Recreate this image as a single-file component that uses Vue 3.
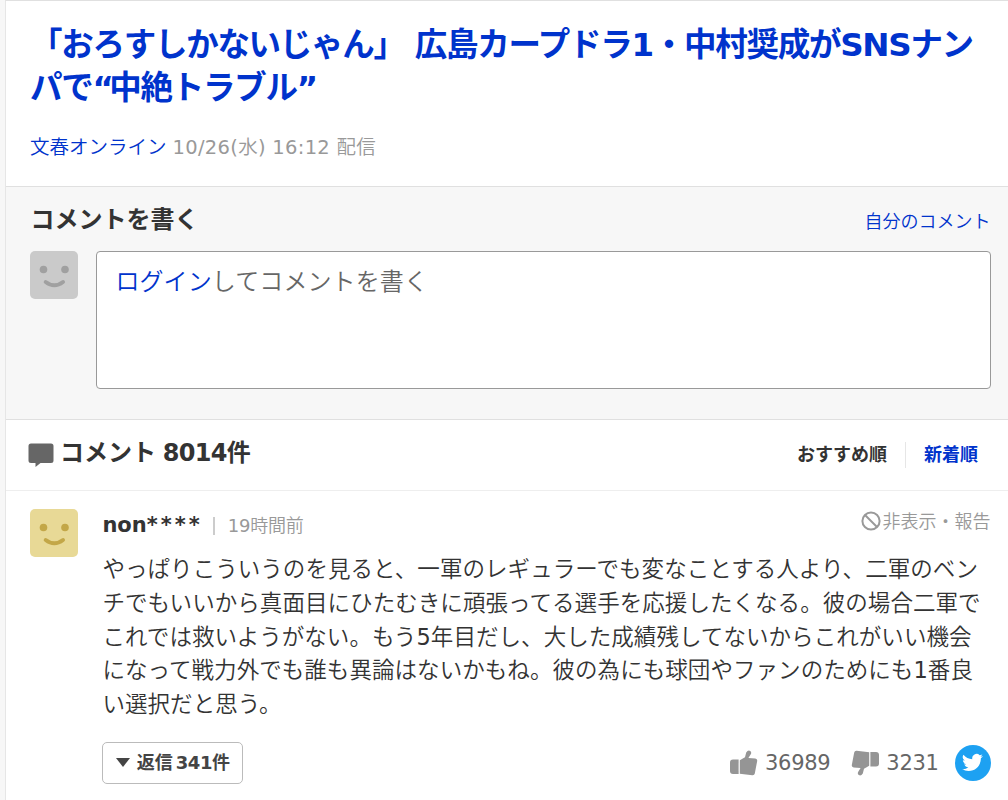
<script setup>
import { ref } from 'vue';

const sortType = ref('recommend');

const comment = {
  user: 'non',
  mask: '****',
  time: '19時間前',
  lines: [
    'やっぱりこういうのを見ると、一軍のレギュラーでも変なことする人より、二軍のベン',
    'チでもいいから真面目にひたむきに頑張ってる選手を応援したくなる。彼の場合二軍で',
    'これでは救いようがない。もう5年目だし、大した成績残してないからこれがいい機会',
    'になって戦力外でも誰も異論はないかもね。彼の為にも球団やファンのためにも1番良',
    'い選択だと思う。',
  ],
  replies: 341,
  good: 36989,
  bad: 3231,
};

// 数字と和文を分けて太さを揃える
const splitDigits = (text) => text.split(/(\d+)/).filter(Boolean);
const isDigits = (text) => /^\d+$/.test(text);
</script>

<template>
  <div class="page">
    <main class="content">
      <header class="article">
        <h1 class="article-title">
          <span class="line">「おろすしかないじゃん」 広島カープドラ1・中村奨成がSNSナン</span>
          <span class="line">パで<span class="quote">“</span>中絶トラブル<span class="quote">”</span></span>
        </h1>
        <p class="article-meta">
          <a class="link">文春オンライン</a>
          <span class="article-date"><span class="digits">10/26(</span>水<span class="digits">) 16:12 </span>配信</span>
        </p>
      </header>

      <section class="write">
        <div class="write-head">
          <h2>コメントを書く</h2>
          <a class="link">自分のコメント</a>
        </div>
        <div class="write-body">
          <svg class="avatar" viewBox="0 0 48 48">
            <rect width="48" height="48" rx="5" fill="#cacaca" />
            <g fill="#a0a0a0">
              <circle cx="13.5" cy="18.5" r="3.8" />
              <circle cx="35" cy="18.5" r="3.8" />
            </g>
            <path d="M15.7 31Q24.3 37.6 33 31" fill="none" stroke="#a0a0a0" stroke-width="4" stroke-linecap="round" />
          </svg>
          <div class="write-box"><a class="link">ログイン</a>してコメントを書く</div>
        </div>
      </section>

      <section class="list-head">
        <svg class="balloon" viewBox="0 0 26 25">
          <path d="M3 .5H23Q25.5.5 25.5 3V17.5Q25.5 20 23 20H12.5L7.5 24V20H3Q.5 20 .5 17.5V3Q.5.5 3 .5Z" fill="#666" />
        </svg>
        <h2>コメント <span class="count">8014</span>件</h2>
        <ul class="sort">
          <li :class="{ current: sortType === 'recommend' }" @click="sortType = 'recommend'">おすすめ順</li>
          <li :class="{ current: sortType === 'new' }" @click="sortType = 'new'">新着順</li>
        </ul>
      </section>

      <article class="comment">
        <svg class="avatar" viewBox="0 0 48 48">
          <rect width="48" height="48" rx="5" fill="#e8d996" />
          <g fill="#c3a748">
            <circle cx="13.5" cy="18.5" r="3.8" />
            <circle cx="35" cy="18.5" r="3.8" />
          </g>
          <path d="M15.7 31Q24.3 37.6 33 31" fill="none" stroke="#c3a748" stroke-width="4" stroke-linecap="round" />
        </svg>
        <div class="comment-main">
          <div class="comment-head">
            <span class="user">{{ comment.user }}<span class="mask">{{ comment.mask }}</span></span>
            <span class="time">
              <span v-for="part in splitDigits(comment.time)" :key="part" :class="{ digits: isDigits(part) }">{{ part }}</span>
            </span>
            <a class="report">
              <svg viewBox="0 0 20 20">
                <circle cx="10" cy="10" r="8.6" fill="none" stroke="#999" stroke-width="2" />
                <path d="M4 4L16 16" stroke="#999" stroke-width="2" />
              </svg>
              <span>非表示・報告</span>
            </a>
          </div>
          <p class="comment-text">
            <span v-for="line in comment.lines" :key="line" class="line">
              <span v-for="part in splitDigits(line)" :key="part" :class="{ digits: isDigits(part) }">{{ part }}</span>
            </span>
          </p>
          <div class="comment-foot">
            <button type="button" class="reply">
              <svg viewBox="0 0 14 9"><path d="M0 0H14L7 9Z" fill="#444" /></svg>
              <span>返信<span class="reply-count">{{ comment.replies }}</span>件</span>
            </button>
            <div class="votes">
              <svg class="thumb" viewBox="0 0 28 26">
                <path d="M3 9.5H8.6V24H3Q0 24 0 21V12.5Q0 9.5 3 9.5Z" fill="#959595" />
                <path d="M9.8 10.2L15 7.2 16.2 2.6Q18-.4 20.2.9 22 2.2 20.6 4.6L18.4 8 25.3 8.4Q27.5 8.7 27.2 10.9L24.8 23.5Q24.4 25.5 22.3 25.3L9.8 23.8Z" fill="#959595" />
              </svg>
              <span class="num">{{ comment.good }}</span>
              <svg class="thumb down" viewBox="0 0 28 26">
                <path d="M3 9.5H8.6V24H3Q0 24 0 21V12.5Q0 9.5 3 9.5Z" fill="#959595" />
                <path d="M9.8 10.2L15 7.2 16.2 2.6Q18-.4 20.2.9 22 2.2 20.6 4.6L18.4 8 25.3 8.4Q27.5 8.7 27.2 10.9L24.8 23.5Q24.4 25.5 22.3 25.3L9.8 23.8Z" fill="#959595" />
              </svg>
              <span class="num">{{ comment.bad }}</span>
              <a class="twitter">
                <svg viewBox="0 0 24 24">
                  <path
                    d="M23.95 4.57a10 10 0 0 1-2.82.77 4.96 4.96 0 0 0 2.16-2.72c-.95.56-2 .96-3.13 1.18a4.92 4.92 0 0 0-8.38 4.48C7.69 8.1 4.07 6.13 1.64 3.16a4.92 4.92 0 0 0 1.52 6.57 4.9 4.9 0 0 1-2.23-.61v.06a4.92 4.92 0 0 0 3.95 4.83 5 5 0 0 1-2.21.08 4.94 4.94 0 0 0 4.6 3.42A9.87 9.87 0 0 1 0 19.54a14 14 0 0 0 7.55 2.21c9.05 0 14-7.5 14-13.98 0-.21 0-.42-.02-.63a9.94 9.94 0 0 0 2.46-2.55z"
                    fill="#fff"
                  />
                </svg>
              </a>
            </div>
          </div>
        </div>
      </article>
    </main>
  </div>
</template>

<style>
body {
  margin: 0;
  background: #f7f7f7;
}
</style>

<style scoped>
.page {
  height: 800px;
  padding-left: 5px;
  overflow: hidden;
  box-sizing: border-box;
  background: #f7f7f7;
  color: #333;
  font-family: 'DejaVu Sans', 'Noto Sans CJK JP', sans-serif;
  font-weight: 350;
}

.content {
  height: 800px;
  box-sizing: border-box;
  border-top: 1px solid #e0e0e0;
  border-left: 1px solid #e6e6e6;
  background: #fff;
}

h1,
h2,
p,
ul {
  margin: 0;
  padding: 0;
}

.link {
  color: #0033cc;
}

.digits {
  font-weight: 400;
}

.article {
  height: 185px;
  box-sizing: border-box;
  padding: 23px 0 0 24px;
}

.article-title {
  color: #0033cc;
  font-size: 32.5px;
  line-height: 43px;
  letter-spacing: -1.27px;
}

.line {
  display: block;
  white-space: nowrap;
}

.quote {
  letter-spacing: -4.5px;
}

.article-meta {
  display: flex;
  gap: 6px;
  margin-top: 21px;
  font-size: 19.5px;
  line-height: 34px;
  white-space: pre;
}

.article-date {
  color: #999;
  letter-spacing: 0.3px;
}

.write {
  height: 234px;
  box-sizing: border-box;
  padding: 15px 17.4px 0 24.4px;
  border-top: 1px solid #e0e0e0;
  border-bottom: 1px solid #e0e0e0;
  background: #f7f7f7;
}

.write-head {
  display: flex;
  justify-content: space-between;
  align-items: center;
  height: 36px;
}

h2 {
  font-size: 24px;
  line-height: 36px;
  white-space: nowrap;
}

.write-head .link {
  padding-top: 4px;
  font-size: 18px;
  line-height: 36px;
}

.write-body {
  display: flex;
  gap: 18px;
  margin-top: 13px;
}

.avatar {
  width: 48px;
  height: 48px;
  flex: none;
}

.write-box {
  flex: 1;
  height: 138px;
  box-sizing: border-box;
  padding: 12px 18px;
  border: 1px solid #999;
  border-radius: 4px;
  background: #fff;
  color: #666;
  font-size: 24px;
  line-height: 36px;
  letter-spacing: 0.1px;
}

.list-head {
  display: flex;
  align-items: center;
  height: 71px;
  box-sizing: border-box;
  padding: 0 30px 4px 22px;
  border-bottom: 1px solid #eee;
}

.balloon {
  width: 26px;
  height: 25px;
  margin: 4px 6px 0 0;
}

.count {
  margin-left: -1.5px;
  letter-spacing: -0.7px;
}

.sort {
  display: flex;
  margin: 3px 0 0 auto;
  color: #0033cc;
  font-size: 18px;
  font-weight: 700;
  line-height: 26px;
  list-style: none;
}

.sort li + li {
  margin-left: 18px;
  padding-left: 18px;
  border-left: 1px solid #e6e6e6;
}

.sort .current {
  color: #333;
}

.comment {
  display: flex;
  gap: 24px;
  padding: 18px 17.4px 0 24.4px;
}

.comment-main {
  flex: 1;
}

.comment-head {
  display: flex;
  align-items: center;
  height: 34px;
  white-space: nowrap;
}

.user {
  margin-top: -2px;
  font-size: 21px;
  font-weight: 700;
}

.mask {
  letter-spacing: 3px;
}

.time {
  margin-left: 10px;
  padding-left: 13px;
  border-left: 2px solid #ccc;
  color: #999;
  font-size: 18px;
  line-height: 18px;
  letter-spacing: -0.2px;
}

.report {
  display: flex;
  align-items: center;
  margin: -13px 0 0 auto;
  gap: 2px;
  color: #999;
  font-size: 18px;
}

.report svg {
  width: 20px;
  height: 20px;
  margin-top: 3px;
}

.comment-text {
  margin-top: 10px;
  font-size: 22.5px;
  line-height: 33.75px;
  letter-spacing: 0.06px;
}

.comment-foot {
  display: flex;
  align-items: center;
  justify-content: space-between;
  margin-top: 20px;
}

.reply {
  display: flex;
  align-items: center;
  justify-content: center;
  gap: 7px;
  width: 141px;
  height: 42px;
  padding: 0 0 4px;
  border: 1px solid #bbb;
  border-radius: 5px;
  background: #fff;
  color: #444;
  font: inherit;
  font-size: 18px;
  font-weight: 700;
  white-space: nowrap;
}

.reply svg {
  width: 14px;
  height: 9px;
  margin-top: 3px;
}

.reply-count {
  margin-left: 3px;
  letter-spacing: -0.5px;
}

.votes {
  display: flex;
  align-items: center;
  color: #666;
  font-size: 21px;
  font-weight: 400;
}

.thumb {
  width: 28px;
  height: 26px;
}

.thumb.down {
  margin-left: 21px;
  transform: rotate(180deg);
}

.num {
  margin-left: 7px;
  letter-spacing: -0.3px;
}

.twitter {
  display: flex;
  align-items: center;
  justify-content: center;
  width: 36px;
  height: 36px;
  margin-left: 16px;
  border-radius: 50%;
  background: #1da1f2;
}

.twitter svg {
  width: 21px;
  height: 21px;
}
</style>
